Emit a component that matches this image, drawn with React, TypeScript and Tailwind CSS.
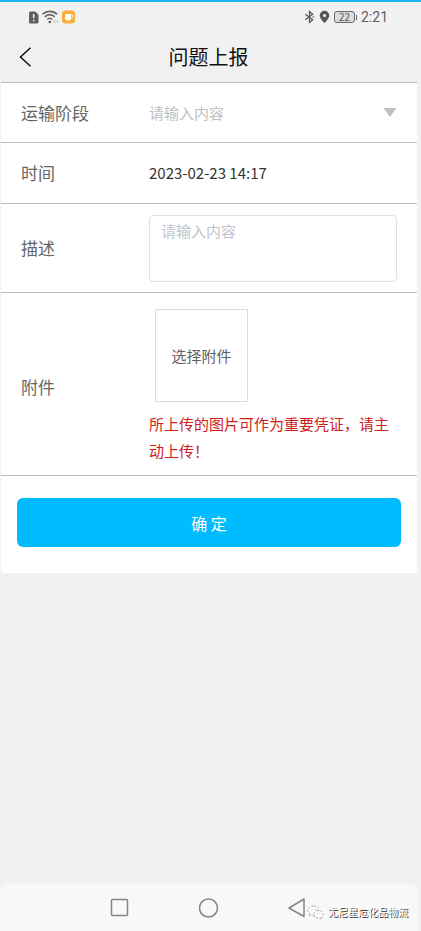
import { useState, type ReactNode } from 'react';

function SimAlertIcon() {
  return (
    <svg className="w-[11px] h-[13px]" viewBox="0 0 10 13" aria-hidden="true">
      <path d="M2 .5h4.600L10 3.600V11a1.500 1.500 0 0 1-1.500 1.500H2A1.500 1.500 0 0 1 .5 11V2A1.500 1.500 0 0 1 2 .5z" fill="#5f5f5f" />
      <path d="M5.200 3v4.200M5.200 8.800v1.500" stroke="#f0f0f0" strokeWidth="1.6" />
    </svg>
  );
}

function WifiIcon() {
  return (
    <svg className="w-[17px] h-[14px]" viewBox="0 0 17 14" fill="none" aria-hidden="true">
      <path d="M.5 4.2C4.500 .3 11 .3 15 4.200M2.800 6.900c2.900-3 7-3 9.900 0M5.200 9.500c1.600-1.700 3.600-1.700 5.200 0" stroke="#666" strokeWidth="1.7" />
      <circle cx="7.800" cy="12" r="1.3" fill="#555" />
      <path d="M13.300 10l-1.200 1.500 1.200 1.500M14.800 10l1.200 1.500-1.200 1.500" stroke="#aaa" strokeWidth="0.8" />
    </svg>
  );
}

function CupIcon() {
  return (
    <svg className="w-[13px] h-[14px]" viewBox="0 0 13 14" aria-hidden="true">
      <rect y="0.5" width="13" height="13" rx="3.5" fill="#fbae35" />
      <path d="M3 4h6v4.200A2.300 2.300 0 0 1 6.700 10.500H5.300A2.300 2.300 0 0 1 3 8.200z" fill="#fff" />
      <path d="M9 5h.6a1.400 1.400 0 0 1 0 2.800H9" fill="none" stroke="#fff" />
    </svg>
  );
}

function BluetoothIcon() {
  return (
    <svg className="w-[11px] h-[14px]" viewBox="0 0 12 14" fill="none" stroke="#5c5c5c" strokeWidth="1.4" aria-hidden="true">
      <path d="M1.500 4l8 6L6 12.800V1.200L9.500 4l-8 6" />
      <path d="M9.300 7h1.700" />
    </svg>
  );
}

function PinIcon() {
  return (
    <svg className="w-[11px] h-[14px]" viewBox="0 0 10 14" aria-hidden="true">
      <path d="M5 .8A4.800 4.800 0 0 0 .2 5.600C.2 8.800 5 13.200 5 13.200s4.800-4.400 4.800-7.600A4.800 4.800 0 0 0 5 .8z" fill="#575757" />
      <circle cx="5" cy="5.5" r="1.6" fill="#f0f0f0" />
    </svg>
  );
}

function StatusBar() {
  return (
    <div className="flex h-8 items-center justify-between border-t-2 border-[#14b4f0] pl-7 pr-[33px]">
      <div className="flex items-center gap-[3px]">
        <SimAlertIcon />
        <WifiIcon />
        <CupIcon />
      </div>
      <div className="flex items-center gap-1">
        <BluetoothIcon />
        <PinIcon />
        <div className="flex items-center gap-px">
          <span className="flex h-3 w-[21px] items-center justify-center rounded-[3px] border border-[#666] bg-[#dcdcdc] text-[10px] leading-none text-[#555]">
            22
          </span>
          <span className="h-[5px] w-px bg-[#666]" />
        </div>
        <span className="font-['Roboto',sans-serif] text-[14px] leading-4 text-[#5f5f5f]">2:21</span>
      </div>
    </div>
  );
}

function Row({ label, htmlFor, className, children }: { label: string; htmlFor: string; className: string; children: ReactNode }) {
  return (
    <div className={`flex items-center border-b border-[#bdbdbd] px-5 ${className}`}>
      <label htmlFor={htmlFor} className="w-32 shrink-0 text-[17px] leading-6 text-[#666]">
        {label}
      </label>
      <div className="min-w-0 flex-1">{children}</div>
    </div>
  );
}

function WechatIcon() {
  return (
    <svg className="h-[15px] w-[17px]" viewBox="0 0 17 15" fill="#fff" stroke="#777" strokeWidth="0.7" strokeDasharray="2 1.5" aria-hidden="true">
      <path d="M6.500 1C3.400 1 1 3 1 5.500c0 1.400.8 2.600 2 3.400L2.500 11l2.200-1.200c.6.200 1.200.2 1.800.2 3 0 5.500-2 5.500-4.500S9.500 1 6.500 1z" />
      <path d="M11.500 5.500c-2.600 0-4.600 1.700-4.600 3.900s2 3.900 4.600 3.900c.5 0 1-.1 1.500-.2l1.900 1-.5-1.700c1-.7 1.700-1.800 1.700-3 0-2.200-2-3.900-4.600-3.900z" />
      <path d="M4.500 4.500h.8M8 4.500h.8M9.800 8.500h.8M12.600 8.500h.8" />
    </svg>
  );
}

export default function App() {
  const [stage, setStage] = useState('');
  const [time, setTime] = useState('2023-02-23 14:17');
  const [description, setDescription] = useState('');

  return (
    <div className="flex min-h-screen flex-col bg-[#f1f1f1] font-['Noto_Sans_CJK_SC',sans-serif]">
      <StatusBar />

      <header className="grid h-[50px] grid-cols-[48px_1fr_52px] items-center">
        <button type="button" aria-label="返回" className="flex h-full items-center pl-[19px]">
          <svg className="h-5 w-3" viewBox="0 0 12 20" fill="none" stroke="#111" strokeWidth="1.5" aria-hidden="true">
            <path d="M11.500 .8L1.500 10l10 9.200" />
          </svg>
        </button>
        <h1 className="text-center text-[20px] leading-7 text-[#111]">问题上报</h1>
      </header>

      <main className="flex-1 pl-px pr-1">
        <form className="rounded-b border-t border-[#bdbdbd] bg-white" onSubmit={(e) => e.preventDefault()}>
          <Row label="运输阶段" htmlFor="stage" className="h-[60px]">
            <div className="flex items-center">
              <select
                id="stage"
                value={stage}
                onChange={(e) => setStage(e.target.value)}
                className="min-w-0 flex-1 appearance-none bg-transparent text-[15px] leading-6 text-[#c0c0c4] outline-none"
              >
                <option value="">请输入内容</option>
              </select>
              <svg className="pointer-events-none h-[9px] w-[14px]" viewBox="0 0 14 9" fill="#c0c0c0" aria-hidden="true">
                <path d="M.5 0h13L7 9z" />
              </svg>
            </div>
          </Row>

          <Row label="时间" htmlFor="time" className="h-[61px]">
            <input
              id="time"
              type="text"
              value={time}
              onChange={(e) => setTime(e.target.value)}
              className="block w-full text-[15px] leading-6 text-[#333] outline-none"
            />
          </Row>

          <Row label="描述" htmlFor="description" className="h-[89px]">
            <textarea
              id="description"
              placeholder="请输入内容"
              value={description}
              onChange={(e) => setDescription(e.target.value)}
              className="block h-[67px] w-full resize-none rounded border border-[#dcdfe3] px-[11px] py-[3px] text-[15px] leading-6 outline-none placeholder:text-[#c0c4cc]"
            />
          </Row>

          <Row label="附件" htmlFor="attachment" className="pt-4 pb-[11px]">
            <button
              id="attachment"
              type="button"
              className="ml-[6px] flex size-[93px] items-center justify-center border border-[#dcdcdc] text-[15px] leading-6 text-[#606060]"
            >
              选择附件
            </button>
            <p className="mt-2 text-[15px] leading-[27px] text-[#d01c1c]">所上传的图片可作为重要凭证，请主动上传！</p>
          </Row>

          <div className="px-4 pt-[22px] pb-[26px]">
            <button type="submit" className="h-[49px] w-full rounded-md bg-[#00bcff] text-[16px] leading-6 text-white">
              确 定
            </button>
          </div>
        </form>
      </main>

      <footer className="pr-1">
        <nav className="relative flex h-[47px] items-center rounded-t-md bg-[#f8f8f8] pl-[110px]">
          <div className="flex items-center gap-[69px]">
            <button type="button" aria-label="最近任务">
              <svg className="size-5" viewBox="0 0 20 20" fill="none" stroke="#858585" strokeWidth="1.5" aria-hidden="true">
                <rect x="1.5" y="1.5" width="16" height="16" rx="1" />
              </svg>
            </button>
            <button type="button" aria-label="主屏幕">
              <svg className="size-5" viewBox="0 0 20 20" fill="none" stroke="#858585" strokeWidth="1.5" aria-hidden="true">
                <circle cx="9.5" cy="10" r="9" />
              </svg>
            </button>
            <button type="button" aria-label="返回上一级">
              <svg className="size-5" viewBox="0 0 20 20" fill="none" stroke="#858585" strokeWidth="1.5" strokeLinejoin="round" aria-hidden="true">
                <path d="M16 1v17.500L1 10z" />
              </svg>
            </button>
          </div>
          <div className="absolute right-[9px] bottom-[11px] flex items-center gap-1">
            <WechatIcon />
            <span className="text-[10px] leading-4 text-white [text-shadow:1px_1px_0_#333]">尤尼星危化品物流</span>
          </div>
        </nav>
      </footer>
    </div>
  );
}
